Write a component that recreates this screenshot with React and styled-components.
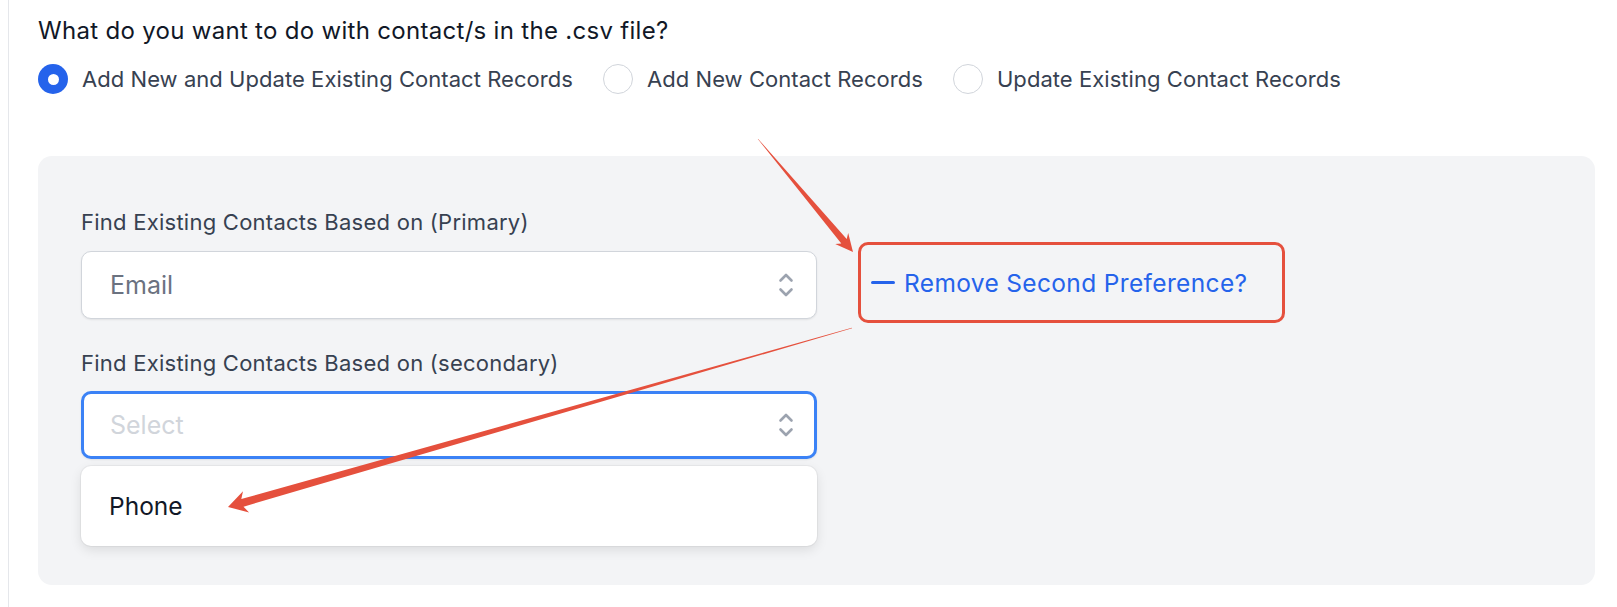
import React from "react";
import styled, { createGlobalStyle } from "styled-components";

const GlobalStyle = createGlobalStyle`
  body {
    margin: 0;
    background: #fff;
    font-family: Inter, "Liberation Sans", sans-serif;
    -webkit-font-smoothing: antialiased;
  }
`;

const Root = styled.div`
  position: relative;
  width: 1617px;
  height: 607px;
  overflow: hidden;
`;

const Page = styled.div`
  box-sizing: border-box;
  width: 1609px;
  height: 607px;
  margin-left: 8px;
  border-left: 1px solid #e5e7eb;
  padding: 17px 22px 0 29px;
`;

const Title = styled.h2`
  font-size: 24px;
  line-height: 28px;
  font-weight: 400;
  letter-spacing: 0.3px;
  color: #111827;
  margin: 0;
`;

const RadioGroup = styled.div`
  display: flex;
  align-items: center;
  gap: 30px;
  margin-top: 19px;
`;

const RadioItem = styled.label`
  display: flex;
  align-items: center;
  gap: 14px;
  font-size: 22px;
  line-height: 30px;
  letter-spacing: 0.05px;
  color: #374151;
`;

const RadioCircle = styled.span`
  box-sizing: border-box;
  width: 30px;
  height: 30px;
  border-radius: 50%;
  display: flex;
  align-items: center;
  justify-content: center;
  background: ${(p) => (p.checked ? "#2563eb" : "#fff")};
  border: ${(p) => (p.checked ? "none" : "1.5px solid #d1d5db")};

  &::after {
    content: "";
    display: ${(p) => (p.checked ? "block" : "none")};
    width: 11px;
    height: 11px;
    border-radius: 50%;
    background: #fff;
  }
`;

const Panel = styled.div`
  box-sizing: border-box;
  margin-top: 62px;
  height: 429px;
  border-radius: 14px;
  background: #f3f4f6;
  padding: 54px 0 0 43px;
  display: flex;
  gap: 41px;
`;

const Column = styled.div`
  width: 736px;
  display: flex;
  flex-direction: column;
`;

const FieldLabel = styled.div`
  font-size: 22px;
  line-height: 24px;
  letter-spacing: 0.25px;
  color: #374151;
  margin-bottom: ${(p) => p.gap}px;
  margin-top: ${(p) => p.top || 0}px;
`;

const SelectWrap = styled.div`
  position: relative;
`;

const SelectBox = styled.div`
  box-sizing: border-box;
  height: 68px;
  border-radius: 10px;
  background: #fff;
  display: flex;
  align-items: center;
  justify-content: space-between;
  padding: ${(p) => (p.focused ? "0 20px 0 26px" : "0 22px 0 28px")};
  font-size: 25px;
  color: ${(p) => (p.placeholder ? "#d1d5db" : "#6b7280")};
  border: ${(p) => (p.focused ? "3px solid #3b82f6" : "1px solid #d1d5db")};
  box-shadow: 0 1px 2px rgba(0, 0, 0, 0.08);
`;

const Menu = styled.div`
  position: absolute;
  top: calc(100% + 7px);
  left: 0;
  right: 0;
  height: 80px;
  box-sizing: border-box;
  background: #fff;
  border-radius: 10px;
  box-shadow: 0 4px 12px rgba(0, 0, 0, 0.1), 0 0 0 1px rgba(0, 0, 0, 0.04);
  display: flex;
  align-items: center;
  padding-left: 28px;
  font-size: 24.5px;
  color: #111827;
`;

const RemoveBox = styled.div`
  box-sizing: border-box;
  margin-top: 32px;
  width: 427px;
  height: 81px;
  border: 3px solid #e5503d;
  border-radius: 10px;
  display: flex;
  align-items: center;
  gap: 9px;
  padding-left: 10px;
`;

const Minus = styled.span`
  width: 24px;
  height: 3px;
  border-radius: 2px;
  background: #2563eb;
`;

const RemoveLink = styled.span`
  font-size: 24.5px;
  color: #2563eb;
  letter-spacing: 0.35px;
`;

const Overlay = styled.svg`
  position: absolute;
  top: 0;
  left: 0;
  pointer-events: none;
`;

const Chevrons = () => (
  <svg width="16" height="26" viewBox="0 0 16 26" fill="none" stroke="#9ca3af" strokeWidth="2.6" strokeLinecap="round" strokeLinejoin="round">
    <path d="M2.5 8.5 L8 3 L13.5 8.5" />
    <path d="M2.5 17.5 L8 23 L13.5 17.5" />
  </svg>
);

function arrow(tail, tip, tw, sw, headLen, hw) {
  const dx = tip[0] - tail[0];
  const dy = tip[1] - tail[1];
  const len = Math.hypot(dx, dy);
  const d = [dx / len, dy / len];
  const n = [-d[1], d[0]];
  const neck = [tip[0] - d[0] * headLen, tip[1] - d[1] * headLen];
  const barb = [tip[0] - d[0] * headLen * 1.25, tip[1] - d[1] * headLen * 1.25];
  const pt = (p, k) => `${(p[0] + n[0] * k).toFixed(1)},${(p[1] + n[1] * k).toFixed(1)}`;
  return [
    pt(tail, tw / 2),
    pt(neck, sw / 2),
    pt(barb, hw / 2),
    `${tip[0]},${tip[1]}`,
    pt(barb, -hw / 2),
    pt(neck, -sw / 2),
    pt(tail, -tw / 2),
  ].join(" ");
}

const options = [
  { label: "Add New and Update Existing Contact Records", checked: true },
  { label: "Add New Contact Records" },
  { label: "Update Existing Contact Records" },
];

export default function App() {
  return (
    <Root>
      <GlobalStyle />
      <Page>
        <Title>What do you want to do with contact/s in the .csv file?</Title>

        <RadioGroup>
          {options.map((o) => (
            <RadioItem key={o.label}>
              <RadioCircle checked={o.checked} />
              {o.label}
            </RadioItem>
          ))}
        </RadioGroup>

        <Panel>
          <Column>
            <FieldLabel gap={17}>Find Existing Contacts Based on (Primary)</FieldLabel>
            <SelectBox>
              Email
              <Chevrons />
            </SelectBox>

            <FieldLabel top={32} gap={16}>Find Existing Contacts Based on (secondary)</FieldLabel>
            <SelectWrap>
              <SelectBox focused placeholder>
                Select
                <Chevrons />
              </SelectBox>
              <Menu>Phone</Menu>
            </SelectWrap>
          </Column>

          <div>
            <RemoveBox>
              <Minus />
              <RemoveLink>Remove Second Preference?</RemoveLink>
            </RemoveBox>
          </div>
        </Panel>
      </Page>

      <Overlay width="1617" height="607" viewBox="0 0 1617 607">
        <polygon fill="#e5503d" points={arrow([758, 139], [853, 252], 0.4, 7, 14, 17)} />
        <polygon fill="#e5503d" points={arrow([852, 328], [228, 507], 0.4, 8, 15, 22)} />
      </Overlay>
    </Root>
  );
}
